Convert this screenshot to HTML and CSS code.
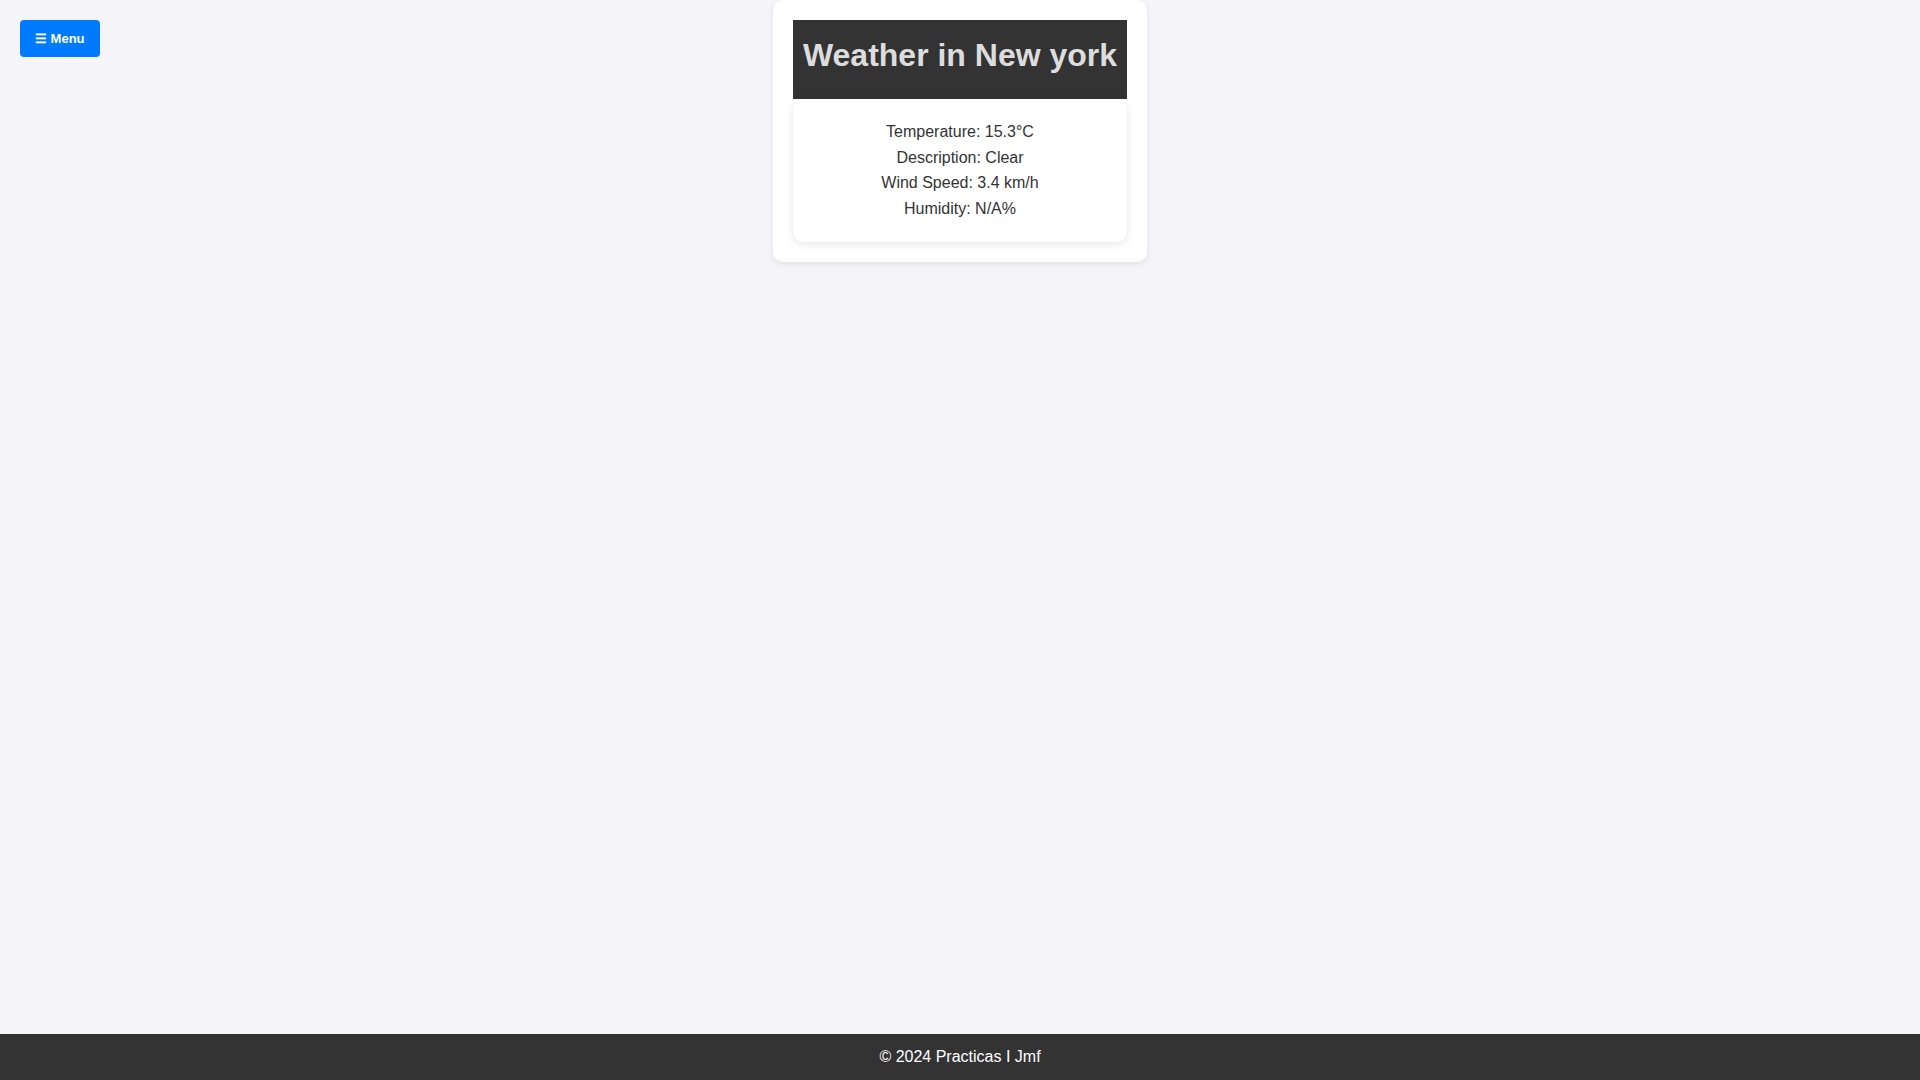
FILE: index.html
```html
<!DOCTYPE html>
<html lang="en">
<head>
<meta charset="utf-8">
<title>Weather</title>
<link rel="stylesheet" href="styles.css">
</head>
<body>
<button class="menu-btn">☰ Menu</button>
<main class="main">
  <section class="weather-card">
    <h1 class="weather-title">Weather in New york</h1>
    <div class="weather-info">
      <p>Temperature: 15.3°C</p>
      <p>Description: Clear</p>
      <p>Wind Speed: 3.4 km/h</p>
      <p>Humidity: N/A%</p>
    </div>
  </section>
</main>
<footer class="footer">© 2024 Practicas I Jmf</footer>
</body>
</html>
```
FILE: styles.css
```css
* { box-sizing: border-box; }
html, body { margin: 0; padding: 0; }
body {
  font-family: "Liberation Sans", Arial, sans-serif;
  background: #f4f4f9;
  color: #333;
  min-height: 100vh;
  display: flex;
  flex-direction: column;
}
.menu-btn {
  position: fixed;
  top: 20px;
  left: 20px;
  background: #007bff;
  color: #fff;
  border: none;
  border-radius: 4px;
  padding: 11px 15px;
  font-family: "Liberation Sans", Arial, sans-serif;
  font-size: 13px;
  font-weight: bold;
  line-height: 15px;
  cursor: pointer;
}
.main {
  flex: 1;
  display: flex;
  justify-content: center;
  align-items: flex-start;
}
.weather-card {
  width: 374px;
  background: #fff;
  border-radius: 10px;
  padding: 20px;
  box-shadow: 0 2px 6px rgba(0,0,0,0.08);
}
.weather-title {
  margin: 0;
  background: #333;
  color: #ddd;
  font-size: 32px;
  font-weight: bold;
  line-height: 37px;
  padding: 17px 0 25px;
  text-align: center;
  white-space: nowrap;
}
.weather-info {
  background: #fff;
  border-radius: 10px;
  padding: 20px 0 21px;
  text-align: center;
  box-shadow: 0 2px 8px rgba(0,0,0,0.1);
  height: 143px;
}
.weather-info p {
  margin: 0;
  font-size: 16px;
  line-height: 25.5px;
}
.footer {
  background: #333;
  color: #fff;
  text-align: center;
  height: 46px;
  line-height: 46px;
  font-size: 16px;
}
```
